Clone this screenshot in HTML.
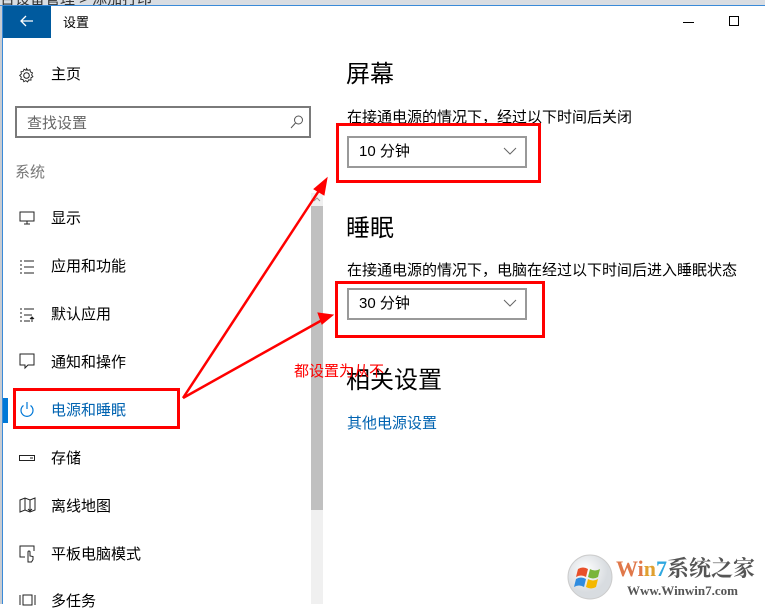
<!DOCTYPE html>
<html><head><meta charset="utf-8"><style>
*{margin:0;padding:0;box-sizing:border-box}
body{width:765px;height:604px;overflow:hidden;background:#fff;position:relative;font-family:"Liberation Sans","Noto Sans CJK SC",sans-serif;color:#000}
.a{position:absolute;white-space:nowrap}
.it{position:absolute;left:51px;font-size:15px;line-height:20px}
.ic{position:absolute;left:19px}
</style></head><body>
<div class="a" style="left:0;top:0;width:765px;height:5px;background:#d9dde2;overflow:hidden"><span style="position:absolute;left:0;top:-12px;font-size:15px;color:#333">台设备管理 &gt; 添加打印</span></div>
<div class="a" style="left:0;top:5px;width:765px;height:1px;background:#3a8ad8"></div>
<div class="a" style="left:0;top:6px;width:3px;height:598px;background:#c8ccd2"></div>
<div class="a" style="left:2px;top:6px;width:1px;height:598px;background:#3a8ad8"></div>
<div class="a" style="left:3px;top:6px;width:48px;height:32px;background:#005a9e"></div>
<svg class="a" style="left:19px;top:13px" width="16" height="16" viewBox="0 0 16 16"><path d="M14 8H2M7 3L2 8l5 5" stroke="#fff" stroke-width="1.3" fill="none"/></svg>
<div class="a" style="left:63px;top:12px;font-size:13px">设置</div>
<div class="a" style="left:683px;top:22px;width:11px;height:1px;background:#000"></div>
<div class="a" style="left:729px;top:16px;width:10px;height:10px;border:1px solid #000"></div>
<svg class="a" style="left:18px;top:67px" width="17" height="17" viewBox="0 0 17 17"><circle cx="8.5" cy="8.5" r="2.8" fill="none" stroke="#222"/><path d="M8.5 1.5l1.3 1.8 2.2-.6.4 2.2 2.1.9-.9 2.1 1.3 1.8-2 1.1.1 2.3-2.3-.2-1.1 2-1.8-1.3-2 1.1-.8-2.2-2.3-.3.6-2.2-1.6-1.6 1.7-1.5-.4-2.2 2.2-.3.9-2.1 2 1z" fill="none" stroke="#222" stroke-width="0.9"/></svg>
<div class="it" style="top:65px;left:51px">主页</div>
<div class="a" style="left:15px;top:106px;width:296px;height:32px;border:2px solid #7a7a7a"></div>
<div class="a" style="left:27px;top:112px;font-size:15px;color:#666">查找设置</div>
<svg class="a" style="left:289px;top:114px" width="16" height="16" viewBox="0 0 16 16"><circle cx="9.5" cy="6" r="4" fill="none" stroke="#555"/><path d="M6.5 9L2 14" stroke="#555"/></svg>
<div class="a" style="left:15px;top:161px;font-size:15px;color:#777">系统</div>

<svg class="ic" style="top:211px" width="16" height="14"><rect x="1" y="1" width="14" height="9" fill="none" stroke="#222"/><path d="M8 10v3M5 13h6" stroke="#222"/></svg>
<div class="it" style="top:209px">显示</div>
<svg class="ic" style="top:259px" width="16" height="16"><path d="M1 2h2M1 6h2M1 10h2M1 14h2M5 2h10M5 8h10M5 14h10" stroke="#222"/></svg>
<div class="it" style="top:257px">应用和功能</div>
<svg class="ic" style="top:307px" width="16" height="16"><path d="M1 2h2M1 6h2M1 10h2M1 14h2M5 2h10M5 8h8M5 14h6M13 10v5M11 12l2-2 2 2" stroke="#222"/></svg>
<div class="it" style="top:305px">默认应用</div>
<svg class="ic" style="top:353px" width="16" height="18"><path d="M1 1h14v11H9l-3 3v-3H1z" fill="none" stroke="#222"/></svg>
<div class="it" style="top:353px">通知和操作</div>
<div class="a" style="left:3px;top:398px;width:5px;height:25px;background:#0078d7"></div>
<svg class="ic" style="top:401px" width="16" height="17"><path d="M4.5 4.5a6 6 0 1 0 7 0" fill="none" stroke="#0078d7" stroke-width="1.2"/><path d="M8 1v7" stroke="#0078d7" stroke-width="1.2"/></svg>
<div class="it" style="top:401px;color:#0063b1">电源和睡眠</div>
<div class="a" style="left:13px;top:388px;width:167px;height:41px;border:3px solid #f00"></div>
<svg class="ic" style="top:454px" width="17" height="8"><rect x="0.5" y="1.5" width="15" height="5" fill="none" stroke="#222"/><path d="M11 4h3" stroke="#222"/></svg>
<div class="it" style="top:449px">存储</div>
<svg class="ic" style="top:497px" width="17" height="18"><path d="M1 3l5-2 5 2 5-2v12l-5 2-5-2-5 2z" fill="none" stroke="#222"/><path d="M6 1v12M11 3v8M11 9v5M9 12l2 2 2-2" stroke="#222" fill="none"/></svg>
<div class="it" style="top:497px">离线地图</div>
<svg class="ic" style="top:545px" width="17" height="18"><path d="M6 12H1V1h14v5" fill="none" stroke="#222"/><path d="M9 16V7a1 1 0 0 1 2 0v4l3 .5v3l-1.5 2.5H9z" fill="none" stroke="#222"/></svg>
<div class="it" style="top:545px">平板电脑模式</div>
<svg class="ic" style="top:594px" width="17" height="12"><path d="M1 1v10M16 1v10M4 1h9v10H4z" fill="none" stroke="#222"/></svg>
<div class="it" style="top:592px">多任务</div>

<div class="a" style="left:311px;top:193px;width:12px;height:411px;background:#f0f0f0"></div>
<div class="a" style="left:311px;top:206px;width:12px;height:304px;background:#c0c0c0"></div>
<svg class="a" style="left:313px;top:197px" width="8" height="5"><path d="M1 4l3-3 3 3" stroke="#999" fill="none"/></svg>

<div class="a" style="left:346px;top:60px;font-size:24px;line-height:30px">屏幕</div>
<div class="a" style="left:347px;top:108px;font-size:15px;line-height:20px">在接通电源的情况下，经过以下时间后关闭</div>
<div class="a" style="left:347px;top:136px;width:180px;height:32px;border:2px solid #999;background:#fff"></div>
<div class="a" style="left:359px;top:142px;font-size:15px;line-height:20px">10 分钟</div>
<svg class="a" style="left:503px;top:147px" width="14" height="8"><path d="M1 1l6 6 6-6" stroke="#666" fill="none"/></svg>
<div class="a" style="left:336px;top:123px;width:205px;height:60px;border:3px solid #f00"></div>

<div class="a" style="left:346px;top:214px;font-size:24px;line-height:30px">睡眠</div>
<div class="a" style="left:347px;top:261px;font-size:15px;line-height:20px">在接通电源的情况下，电脑在经过以下时间后进入睡眠状态</div>
<div class="a" style="left:347px;top:288px;width:180px;height:32px;border:2px solid #999;background:#fff"></div>
<div class="a" style="left:359px;top:294px;font-size:15px;line-height:20px">30 分钟</div>
<svg class="a" style="left:503px;top:299px" width="14" height="8"><path d="M1 1l6 6 6-6" stroke="#666" fill="none"/></svg>
<div class="a" style="left:335px;top:281px;width:210px;height:57px;border:3px solid #f00"></div>

<div class="a" style="left:346px;top:366px;font-size:24px;line-height:30px">相关设置</div>
<div class="a" style="left:347px;top:414px;font-size:15px;line-height:20px;color:#0063b1">其他电源设置</div>
<div class="a" style="left:294px;top:362px;font-size:15px;line-height:20px;color:#f00">都设置为从不</div>

<svg class="a" style="left:0;top:0" width="765" height="604">
<g stroke="#f00" stroke-width="2.5" fill="#f00">
<path d="M183 398L322 186"/><path d="M183 398L324 319"/>
<path d="M327 178L314 189L324 195Z" stroke-width="1"/>
<path d="M333 315L318 313L322 324Z" stroke-width="1"/>
</g></svg>

<svg class="a" style="left:566px;top:553px" width="48" height="48"><defs><radialGradient id="g" cx="40%" cy="35%"><stop offset="0" stop-color="#fff"/><stop offset="1" stop-color="#d8dce0"/></radialGradient></defs><circle cx="24" cy="24" r="22" fill="url(#g)" stroke="#ccc"/>
<path d="M12 16q5-3 10 0l-2 8q-5-3-10 0z" fill="#e8502a"/><path d="M24 16q5 3 10 0l-2 8q-5 3-10 0z" fill="#7ab53a"/><path d="M10 26q5-3 10 0l-2 8q-5-3-10 0z" fill="#2f8ce0"/><path d="M22 26q5 3 10 0l-2 8q-5 3-10 0z" fill="#f5b800"/></svg>
<div class="a" style="left:616px;top:556px;font-size:22px;line-height:26px;font-weight:bold;font-family:'Liberation Serif','Noto Serif CJK SC',serif"><span style="color:#e0784a">Wi</span><span style="color:#e0a030">n</span><span style="color:#30a8e0">7</span><span style="color:#555">系统之家</span></div>
<div class="a" style="left:627px;top:584px;font-size:13px;line-height:14px;font-weight:bold;color:#555;font-family:'Liberation Serif',serif">Www.Winwin7.com</div>
</body></html>
